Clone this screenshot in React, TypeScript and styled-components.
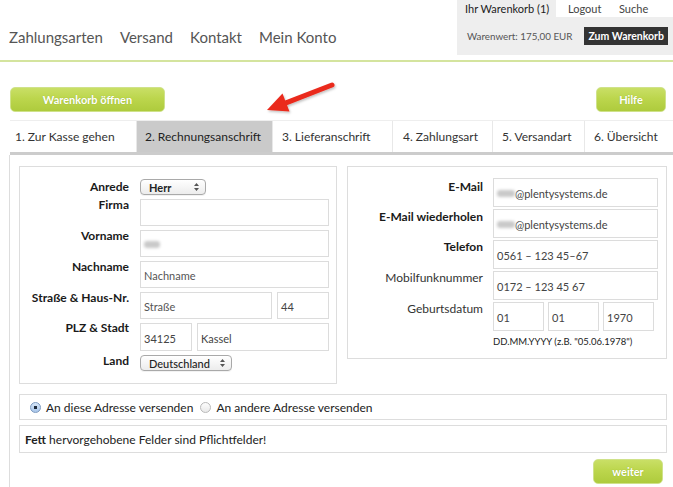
import React from "react";
import styled, { createGlobalStyle } from "styled-components";

const Global = createGlobalStyle`
  * { box-sizing: border-box; }
  html, body { margin: 0; padding: 0; background: #fff; }
  body { font-family: Lato, "Open Sans", "DejaVu Sans", sans-serif; color: #333; }
`;

const Page = styled.div`
  width: 673px;
  height: 487px;
  overflow: hidden;
  position: relative;
`;

const Header = styled.header`
  display: flex;
  justify-content: space-between;
  height: 55px;
`;

const Nav = styled.nav`
  display: flex;
  gap: 17px;
  padding: 28px 0 0 9px;
`;

const NavLink = styled.span`
  font-size: 15px;
  line-height: 18px;
  color: #555;
  white-space: nowrap;
`;

const Cart = styled.div`
  width: 216px;
  flex-shrink: 0;
  display: flex;
  flex-direction: column;
`;

const CartTop = styled.div`
  display: flex;
  height: 17px;
  font-size: 11px;
  line-height: 17px;
  white-space: nowrap;
`;

const CartTab = styled.span<{ $active?: boolean; $w: number }>`
  flex-shrink: 0;
  width: ${(p) => p.$w}px;
  padding-left: ${(p) => (p.$active ? "8px" : "12px")};
  background: ${(p) => (p.$active ? "#eeeeee" : "#fff")};
  color: ${(p) => (p.$active ? "#222" : "#444")};
`;

const CartBottom = styled.div`
  flex: 1;
  background: #eeeeee;
  display: flex;
  align-items: center;
  padding: 0 5px 0 10px;
  justify-content: space-between;
  white-space: nowrap;
`;

const CartValue = styled.span`
  font-size: 9.8px;
  color: #555;
`;

const DarkButton = styled.span`
  background: #333;
  color: #fff;
  font-weight: 700;
  font-size: 10.5px;
  padding: 0 4px;
  height: 18px;
  line-height: 18px;
`;

const Divider = styled.div`
  margin-top: 5px;
  border-top: 2px solid #d4e49e;
`;

const ButtonRow = styled.div`
  position: relative;
  margin-top: 25px;
  padding: 0 7px 0 10px;
  display: flex;
  justify-content: space-between;
`;

const GreenButton = styled.span<{ $w: number }>`
  display: inline-flex;
  align-items: center;
  justify-content: center;
  width: ${(p) => p.$w}px;
  height: 25px;
  border-radius: 5px;
  border: 1px solid #cfe28a;
  background: linear-gradient(#c9df66 0%, #bcd64d 45%, #aecb3d 100%);
  color: #fff;
  font-weight: 700;
  font-size: 11px;
  text-shadow: 0 0 1px rgba(120, 150, 20, 0.6);
`;

const ArrowSvg = styled.svg`
  position: absolute;
  left: 262px;
  top: -7px;
`;

const Tabs = styled.div`
  margin: 8px 0 0 10px;
  display: flex;
  border-top: 1px solid #eee;
  border-bottom: 3px solid #cccccc;
`;

const Tab = styled.div<{ $w: number; $active?: boolean; $pad: number }>`
  width: ${(p) => p.$w}px;
  flex-shrink: 0;
  height: 31px;
  line-height: 31px;
  padding-left: ${(p) => p.$pad}px;
  font-size: 12px;
  color: ${(p) => (p.$active ? "#222" : "#333")};
  background: ${(p) => (p.$active ? "#cacaca" : "#fff")};
  border-right: 1px solid #e8e8e8;
  white-space: nowrap;
`;

const Content = styled.div`
  margin-left: 9px;
  border-left: 1px solid #dddddd;
  padding: 11px 6px 40px 9px;
`;

const PanelRow = styled.div`
  display: flex;
  gap: 10px;
  align-items: flex-start;
`;

const Panel = styled.div<{ $w?: number }>`
  ${(p) => (p.$w ? `width: ${p.$w}px;` : "flex: 1;")}
  border: 1px solid #dddddd;
`;

const FormGrid = styled.div<{ $cols: string; $gap: number; $rowGap: number; $pad: string }>`
  display: grid;
  grid-template-columns: ${(p) => p.$cols};
  column-gap: ${(p) => p.$gap}px;
  row-gap: ${(p) => p.$rowGap}px;
  padding: ${(p) => p.$pad};
`;

const Label = styled.div<{ $bold?: boolean; $center?: boolean; $offset?: number }>`
  text-align: right;
  font-size: 12px;
  line-height: 14px;
  font-weight: ${(p) => (p.$bold ? 700 : 400)};
  color: ${(p) => (p.$bold ? "#1a1a1a" : "#333")};
  align-self: ${(p) => (p.$center ? "center" : "start")};
  margin-top: ${(p) => (p.$center ? 0 : p.$offset ?? 0)}px;
  white-space: nowrap;
`;

const FieldGroup = styled.div<{ $cols: string; $gap: number }>`
  display: grid;
  grid-template-columns: ${(p) => p.$cols};
  column-gap: ${(p) => p.$gap}px;
`;

const Field = styled.div<{ $h: number; $muted?: boolean }>`
  height: ${(p) => p.$h}px;
  border: 1px solid #dcdcdc;
  background: #fff;
  display: flex;
  align-items: center;
  padding: 2px 3px 0;
  font-size: 11px;
  color: ${(p) => (p.$muted ? "#555" : "#444")};
  white-space: nowrap;
`;

const Blur = styled.span<{ $w: number }>`
  display: inline-block;
  width: ${(p) => p.$w}px;
  height: 7px;
  background: #c9c9c9;
  border-radius: 3px;
  filter: blur(1.5px);
`;

const SelectBox = styled.div<{ $w: number; $weight: number }>`
  width: ${(p) => p.$w}px;
  height: 16px;
  border: 1px solid #a9a9a9;
  border-radius: 4px;
  background: linear-gradient(#ffffff, #ececec);
  display: flex;
  align-items: center;
  justify-content: space-between;
  padding: 0 6px 0 8px;
  font-size: 11px;
  font-weight: ${(p) => p.$weight};
  color: #222;
  box-shadow: 0 1px 0 rgba(0, 0, 0, 0.05);
`;

const Hint = styled.div`
  grid-column: 2;
  font-size: 9.5px;
  color: #222;
  margin-top: 2px;
  line-height: 14px;
  white-space: nowrap;
`;

const Box = styled.div<{ $h: number; $mt: number; $pl: number }>`
  margin-top: ${(p) => p.$mt}px;
  height: ${(p) => p.$h}px;
  border: 1px solid #dddddd;
  display: flex;
  align-items: center;
  padding: 0 5px 0 ${(p) => p.$pl}px;
  font-size: 12px;
  color: #222;
  gap: 4px;
`;

const RadioLabel = styled.label`
  display: inline-flex;
  align-items: center;
  gap: 5px;
  margin-right: 3px;
`;

const RadioCircle = styled.span<{ $checked?: boolean }>`
  width: 11px;
  height: 11px;
  border-radius: 50%;
  border: 1px solid ${(p) => (p.$checked ? "#7d9ac0" : "#b9b9b9")};
  background: ${(p) =>
    p.$checked
      ? "radial-gradient(circle, #1d2a3a 0 1.5px, transparent 2px), linear-gradient(#d6e6f8, #a9c6ea)"
      : "linear-gradient(#fdfdfd, #e9e9e9)"};
`;

const Footer = styled.div`
  display: flex;
  justify-content: flex-end;
  margin-top: 6px;
  padding-right: 4px;
`;

const SelectArrows = () => (
  <svg width="5" height="8" viewBox="0 0 5 8">
    <path d="M2.5 0 L5 3 L0 3 Z M0 5 L5 5 L2.5 8 Z" fill="#555" />
  </svg>
);

const Arrow = () => (
  <ArrowSvg width="76" height="36" viewBox="0 0 76 36">
    <defs>
      <filter id="sh" x="-20%" y="-20%" width="140%" height="160%">
        <feDropShadow dx="1" dy="1.5" stdDeviation="1" floodColor="#000" floodOpacity="0.25" />
      </filter>
    </defs>
    <g filter="url(#sh)" fill="#ea2a1c" stroke="none">
      <path d="M70 5 L24 22.8" stroke="#ea2a1c" strokeWidth="5" strokeLinecap="round" />
      <polygon points="5,30 20.5,13.6 27.5,31.5" />
    </g>
  </ArrowSvg>
);

const tabs = [
  { t: "1. Zur Kasse gehen", w: 127, pad: 5 },
  { t: "2. Rechnungsanschrift", w: 136, pad: 8, active: true },
  { t: "3. Lieferanschrift", w: 120, pad: 9 },
  { t: "4. Zahlungsart", w: 100, pad: 10 },
  { t: "5. Versandart", w: 92, pad: 9 },
  { t: "6. Übersicht", w: 90, pad: 9 },
];

export default function App() {
  return (
    <Page>
      <Global />
      <Header>
        <Nav>
          <NavLink>Zahlungsarten</NavLink>
          <NavLink>Versand</NavLink>
          <NavLink>Kontakt</NavLink>
          <NavLink>Mein Konto</NavLink>
        </Nav>
        <Cart>
          <CartTop>
            <CartTab $active $w={99}>Ihr Warenkorb (1)</CartTab>
            <CartTab $w={51}>Logout</CartTab>
            <CartTab $w={66}>Suche</CartTab>
          </CartTop>
          <CartBottom>
            <CartValue>Warenwert: 175,00 EUR</CartValue>
            <DarkButton>Zum Warenkorb</DarkButton>
          </CartBottom>
        </Cart>
      </Header>
      <Divider />
      <ButtonRow>
        <GreenButton $w={155}>Warenkorb öffnen</GreenButton>
        <Arrow />
        <GreenButton $w={70}>Hilfe</GreenButton>
      </ButtonRow>
      <Tabs>
        {tabs.map((t) => (
          <Tab key={t.t} $w={t.w} $pad={t.pad} $active={t.active}>
            {t.t}
          </Tab>
        ))}
      </Tabs>
      <Content>
        <PanelRow>
          <Panel $w={318}>
            <FormGrid $cols="109px 189px" $gap={11} $rowGap={4} $pad="12px 0 12px 0">
              <Label $bold $center>Anrede</Label>
              <SelectBox $w={66} $weight={700}>
                <span>Herr</span>
                <SelectArrows />
              </SelectBox>
              <Label $bold $offset={-1}>Firma</Label>
              <Field $h={27} />
              <Label $bold $offset={-1}>Vorname</Label>
              <Field $h={27}>
                <Blur $w={16} />
              </Field>
              <Label $bold $offset={-1}>Nachname</Label>
              <Field $h={27} $muted>Nachname</Field>
              <Label $bold $offset={-1}>Straße &amp; Haus-Nr.</Label>
              <FieldGroup $cols="132px 52px" $gap={5}>
                <Field $h={27} $muted>Straße</Field>
                <Field $h={27}>44</Field>
              </FieldGroup>
              <Label $bold $offset={-2}>PLZ &amp; Stadt</Label>
              <FieldGroup $cols="52px 132px" $gap={5}>
                <Field $h={28}>34125</Field>
                <Field $h={28}>Kassel</Field>
              </FieldGroup>
              <Label $bold $offset={-1}>Land</Label>
              <SelectBox $w={92} $weight={500}>
                <span>Deutschland</span>
                <SelectArrows />
              </SelectBox>
            </FormGrid>
          </Panel>
          <Panel>
            <FormGrid $cols="135px 165px" $gap={10} $rowGap={2} $pad="11px 8px 9px 0">
              <Label $bold $offset={2}>E-Mail</Label>
              <Field $h={29}>
                <Blur $w={18} />
                @plentysystems.de
              </Field>
              <Label $bold $offset={1}>E-Mail wiederholen</Label>
              <Field $h={29}>
                <Blur $w={18} />
                @plentysystems.de
              </Field>
              <Label $bold $offset={0}>Telefon</Label>
              <Field $h={29}>0561 – 123 45–67</Field>
              <Label $offset={0}>Mobilfunknummer</Label>
              <Field $h={29}>0172 – 123 45 67</Field>
              <Label $offset={0}>Geburtsdatum</Label>
              <FieldGroup $cols="51px 51px 51px" $gap={4}>
                <Field $h={29}>01</Field>
                <Field $h={29}>01</Field>
                <Field $h={29}>1970</Field>
              </FieldGroup>
              <Hint>DD.MM.YYYY (z.B. "05.06.1978")</Hint>
            </FormGrid>
          </Panel>
        </PanelRow>
        <Box $h={26} $mt={10} $pl={10}>
          <RadioLabel>
            <RadioCircle $checked />
            An diese Adresse versenden
          </RadioLabel>
          <RadioLabel>
            <RadioCircle />
            An andere Adresse versenden
          </RadioLabel>
        </Box>
        <Box $h={28} $mt={5} $pl={5}>
          <span>
            <b>Fett</b> hervorgehobene Felder sind Pflichtfelder!
          </span>
        </Box>
        <Footer>
          <GreenButton $w={70}>weiter</GreenButton>
        </Footer>
      </Content>
    </Page>
  );
}
